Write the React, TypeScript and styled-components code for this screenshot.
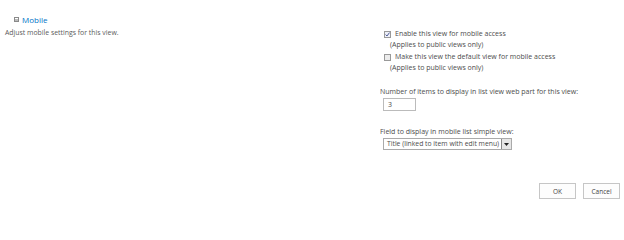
import React from "react";
import styled, { createGlobalStyle } from "styled-components";

const GlobalStyle = createGlobalStyle`
	html, body {
		margin: 0;
		padding: 0;
		background: #fff;
	}
	body {
		font-family: "Open Sans", "Noto Sans", sans-serif;
		color: #4c4c4c;
	}
`;

const Page = styled.div`
	width: 624px;
	height: 211px;
	display: flex;
	flex-direction: column;
	box-sizing: border-box;
`;

const Section = styled.div`
	display: flex;
	padding-top: 14px;
	flex: 1;
`;

const SideInfo = styled.div`
	width: 380px;
	padding-left: 5px;
	box-sizing: border-box;
`;

const SectionTitle = styled.div`
	display: flex;
	align-items: center;
	gap: 3px;
	padding-left: 9px;
	color: #0072c6;
	font-size: 8px;
	line-height: 11px;
`;

const TitleIcon = styled.span`
	display: inline-block;
	width: 5px;
	height: 5px;
	border: 1px solid #8a8a8a;
	background: linear-gradient(#fff 40%, #bbb 40%);
	box-sizing: border-box;
`;

const Description = styled.div`
	margin-top: 3px;
	font-size: 6.9px;
	line-height: 9px;
	color: #5a5a5a;
`;

const Fields = styled.div`
	display: flex;
	flex-direction: column;
	padding-top: 15px;
`;

const CheckRow = styled.label`
	display: flex;
	align-items: center;
	gap: 4px;
	padding-left: 4px;
	font-size: 7px;
	line-height: 10px;
`;

const Box = styled.span<{ checked?: boolean }>`
	width: 7px;
	height: 7px;
	border: 1px solid #999;
	background: ${({ checked }) => (checked ? "#eef0f8" : "#ececec")};
	box-sizing: border-box;
	display: flex;
	align-items: center;
	justify-content: center;
`;

const Note = styled.div<{ gapAfter?: number }>`
	padding-left: 10px;
	font-size: 7px;
	line-height: 11px;
	margin-bottom: ${({ gapAfter }) => gapAfter ?? 0}px;
`;

const FieldLabel = styled.div`
	font-size: 7px;
	line-height: 10px;
`;

const Field = styled.div<{ top: number }>`
	display: flex;
	flex-direction: column;
	align-items: flex-start;
	margin-top: ${({ top }) => top}px;
	gap: 1px;
`;

const NumberBox = styled.div`
	margin-left: 3px;
	width: 33px;
	height: 13px;
	border: 1px solid #bbb;
	box-sizing: border-box;
	font-size: 7px;
	line-height: 11px;
	padding-left: 4px;
`;

const Select = styled.div`
	margin-left: 3px;
	display: flex;
	height: 12px;
	border: 1px solid #aaa;
	box-sizing: border-box;
	font-size: 6.8px;
	line-height: 10px;
`;

const SelectText = styled.span`
	padding: 0 2px 0 3px;
	white-space: nowrap;
`;

const SelectArrow = styled.span`
	width: 9px;
	border-left: 1px solid #888;
	background: #e6e6e6;
	display: flex;
	align-items: center;
	justify-content: center;
`;

const Buttons = styled.div`
	display: flex;
	justify-content: flex-end;
	gap: 7px;
	padding: 0 4px 12px 0;
`;

const Button = styled.button`
	width: 37px;
	height: 16px;
	border: 1px solid #c6c6c6;
	background: #fdfdfd;
	font-family: "Open Sans", "Noto Sans", sans-serif;
	font-size: 6.5px;
	color: #444;
	padding: 0;
`;

function Check({ checked }: { checked?: boolean }) {
	return (
		<Box checked={checked}>
			{checked && (
				<svg width="5" height="5" viewBox="0 0 5 5">
					<path d="M0.6 2.6 L2 4 L4.5 0.6" fill="none" stroke="#3b4a8a" strokeWidth="0.9" />
				</svg>
			)}
		</Box>
	);
}

export default function App() {
	return (
		<Page>
			<GlobalStyle />
			<Section>
				<SideInfo>
					<SectionTitle>
						<TitleIcon />
						Mobile
					</SectionTitle>
					<Description>Adjust mobile settings for this view.</Description>
				</SideInfo>
				<Fields>
					<CheckRow>
						<Check checked />
						Enable this view for mobile access
					</CheckRow>
					<Note gapAfter={2}>(Applies to public views only)</Note>
					<CheckRow>
						<Check />
						Make this view the default view for mobile access
					</CheckRow>
					<Note>(Applies to public views only)</Note>
					<Field top={14}>
						<FieldLabel>Number of items to display in list view web part for this view:</FieldLabel>
						<NumberBox>3</NumberBox>
					</Field>
					<Field top={16}>
						<FieldLabel>Field to display in mobile list simple view:</FieldLabel>
						<Select>
							<SelectText>Title (linked to item with edit menu)</SelectText>
							<SelectArrow>
								<svg width="5" height="3" viewBox="0 0 5 3">
									<path d="M0 0 H5 L2.5 3 Z" fill="#222" />
								</svg>
							</SelectArrow>
						</Select>
					</Field>
				</Fields>
			</Section>
			<Buttons>
				<Button>OK</Button>
				<Button>Cancel</Button>
			</Buttons>
		</Page>
	);
}
